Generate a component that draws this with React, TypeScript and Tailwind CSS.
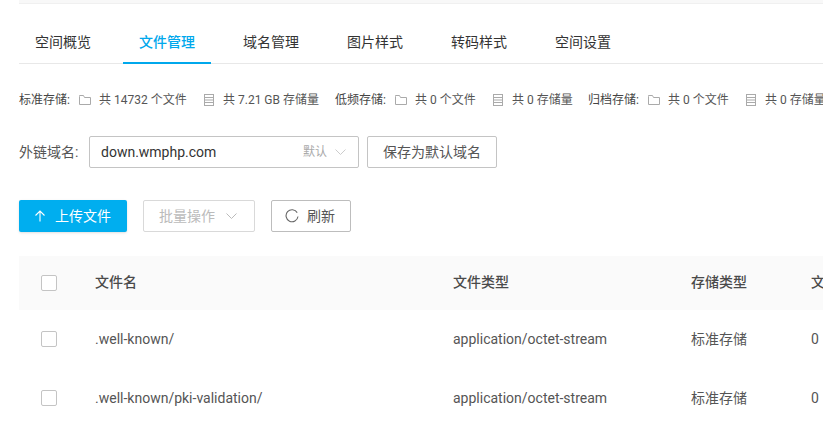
import React from "react";

const font = { fontFamily: '"Roboto","Noto Sans CJK SC",sans-serif' };

function Folder() {
  return (
    <svg width="12" height="12" viewBox="0 0 12 12" fill="none" stroke="#aaa" strokeWidth="1" className="shrink-0">
      <path d="M0.5 2.5V10.5H11.5V3.5H5.5L4.5 1.5H0.5Z" />
    </svg>
  );
}

function Disk() {
  return (
    <svg width="10" height="12" viewBox="0 0 10 12" fill="none" stroke="#aaa" strokeWidth="1" className="shrink-0">
      <rect x="0.5" y="0.5" width="9" height="11" />
      <path d="M0.5 3.5H9.5M0.5 6H9.5M0.5 8.5H9.5" />
    </svg>
  );
}

function Chevron({ color }: { color: string }) {
  return (
    <svg width="11" height="6" viewBox="0 0 11 6" fill="none" stroke={color} strokeWidth="1">
      <path d="M0.5 0.5L5.5 5.5L10.5 0.5" />
    </svg>
  );
}

function Stat({ label, files, size, outer, fileW }: { label: string; files: string; size: string; outer: string; fileW: string }) {
  return (
    <div className={`flex items-center shrink-0 ${outer}`}>
      <span className="w-[60px] shrink-0 text-[#444]">{label}</span>
      <Folder />
      <span className={`ml-[8px] shrink-0 ${fileW}`}>共 {files} 个文件</span>
      <Disk />
      <span className="ml-[9px]">共 {size} 存储量</span>
    </div>
  );
}

function Box() {
  return <span className="block w-4 h-4 rounded-[2px] border border-[#c4c4c4] bg-white" />;
}

function Row({ name, head }: { name: string; head?: boolean }) {
  return (
    <div
      className={`grid grid-cols-[54px_358px_238px_120px_200px] items-center w-[992px] pl-[22px] pb-[1px] text-[14px] ${
        head ? "h-[54px] bg-[#fafafa] font-medium text-[#4a4a4a]" : "h-[59px] text-[#555]"
      }`}
    >
      <Box />
      <span>{name}</span>
      <span>{head ? "文件类型" : "application/octet-stream"}</span>
      <span>{head ? "存储类型" : "标准存储"}</span>
      <span>{head ? "文件大小" : "0"}</span>
    </div>
  );
}

const tabs = ["空间概览", "文件管理", "域名管理", "图片样式", "转码样式", "空间设置"];

export default function App() {
  return (
    <div style={font} className="w-[823px] h-[426px] overflow-hidden bg-white pl-[19px] text-[#333]">
      <div className="h-1 w-[804px] bg-[#f8f8f8] border-b border-[#f0f0f0]" />
      <div className="mt-[21px] flex gap-4 h-[39px] border-b border-[#e8e8e8] w-[804px] text-[14px]">
        {tabs.map((t, i) => (
          <div
            key={t}
            className={`px-4 h-[39px] leading-[34px] ${
              i === 1 ? "text-[#00a8ec] font-medium border-b-2 border-[#00a8ec]" : "text-[#333]"
            }`}
          >
            {t}
          </div>
        ))}
      </div>
      <div className="mt-[27px] flex h-[18px] items-center text-[12px] text-[#555] w-[900px] whitespace-nowrap">
        <Stat label="标准存储:" files="14732" size="7.21 GB" outer="w-[316px]" fileW="w-[105px]" />
        <Stat label="低频存储:" files="0" size="0" outer="w-[253px]" fileW="w-[78px]" />
        <Stat label="归档存储:" files="0" size="0" outer="" fileW="w-[78px]" />
      </div>
      <div className="mt-[27px] flex items-center h-8 text-[14px]">
        <span className="w-[70px] text-[#555]">外链域名:</span>
        <div className="w-[270px] h-8 rounded-[2px] border border-[#c4c4c4] flex items-center pl-[11px] pr-[12px] text-[#333]">
          <span className="flex-1">down.wmphp.com</span>
          <span className="text-[12px] text-[#aaa] mr-[8px]">默认</span>
          <Chevron color="#ccc" />
        </div>
        <button className="ml-2 w-[130px] h-8 rounded-[2px] border border-[#c4c4c4] text-[#555]">保存为默认域名</button>
      </div>
      <div className="mt-[32px] flex items-center gap-4 text-[14px]">
        <button className="w-[108px] h-8 rounded-[2px] bg-[#00aeef] text-white flex items-center pl-[15px] gap-[9px] shadow-sm">
          <svg width="12" height="12" viewBox="0 0 12 12" fill="none" stroke="#fff" strokeWidth="1.1">
            <path d="M6 11.5V1M1.5 5.5L6 1L10.5 5.5" />
          </svg>
          上传文件
        </button>
        <button className="w-[112px] h-8 rounded-[2px] border border-[#d9d9d9] text-[#bbb] flex items-center pl-[15px] gap-[11px]">
          批量操作
          <Chevron color="#bbb" />
        </button>
        <button className="w-20 h-8 rounded-[2px] border border-[#bdbdbd] text-[#555] flex items-center pl-[13px] gap-[8px]">
          <svg width="14" height="14" viewBox="0 0 14 14" fill="none" stroke="#666" strokeWidth="1.1">
            <path d="M12.2 3.6A6 6 0 1 0 13 7.5" />
          </svg>
          刷新
        </button>
      </div>
      <div className="mt-6 w-[804px] overflow-hidden">
        <Row name="文件名" head />
        <Row name=".well-known/" />
        <Row name=".well-known/pki-validation/" />
      </div>
    </div>
  );
}
